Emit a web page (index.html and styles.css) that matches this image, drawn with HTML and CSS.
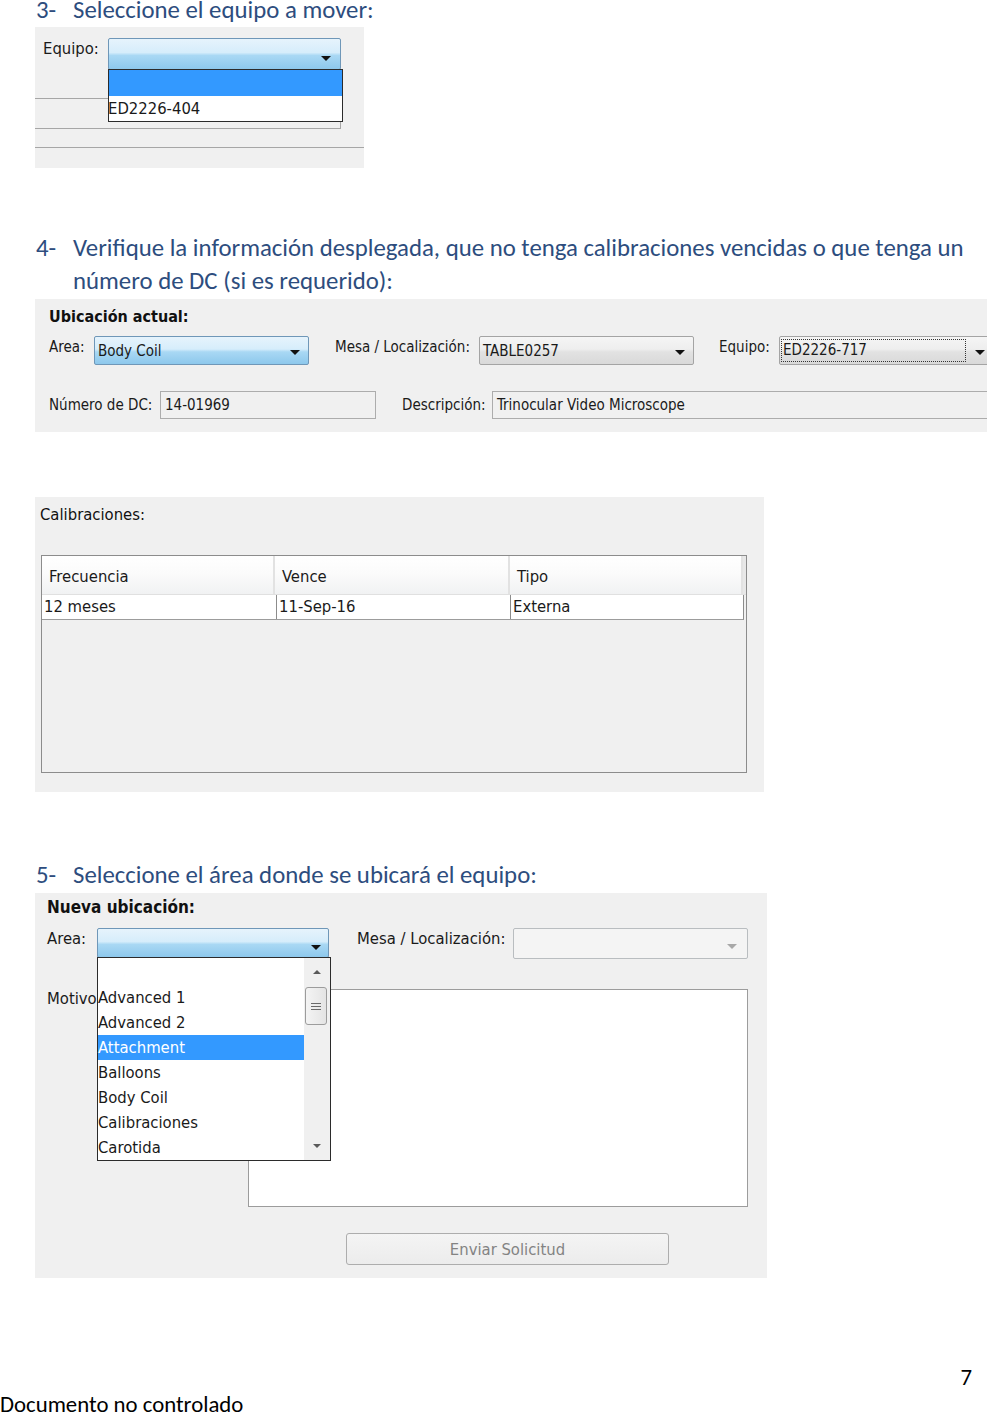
FILE: index.html
```html
<!DOCTYPE html>
<html lang="es">
<head>
<meta charset="utf-8">
<title>Documento</title>
<link rel="stylesheet" href="styles.css">
</head>
<body>
<main class="page">
  <p class="step step-first"><span class="num">3-</span><span class="txt">Seleccione el equipo a mover:</span></p>

  <section class="panel panel-equipo">
    <div class="eq-row">
      <span class="lbl lbl-eq">Equipo:</span>
      <div class="combo combo-blue combo-eq">
        <span class="combo-val"></span>
        <span class="arrow"></span>
        <ul class="popup popup-eq">
          <li class="sel"></li>
          <li>ED2226-404</li>
        </ul>
      </div>
    </div>
    <div class="eq-box"></div>
    <div class="eq-foot"></div>
  </section>

  <p class="step step-4"><span class="num">4-</span><span class="txt">Verifique la información desplegada, que no tenga calibraciones vencidas o que tenga un número de DC (si es requerido):</span></p>

  <section class="panel panel-actual">
    <h3 class="ptitle">Ubicación actual:</h3>
    <div class="frow frow-1">
      <span class="lbl w-area">Area:</span>
      <div class="combo combo-blue w215"><span class="combo-val">Body Coil</span><span class="arrow"></span></div>
      <span class="lbl w-mesa">Mesa / Localización:</span>
      <div class="combo combo-gray w215"><span class="combo-val">TABLE0257</span><span class="arrow"></span></div>
      <span class="lbl w-equipo">Equipo:</span>
      <div class="combo combo-gray w216b"><span class="combo-val focus">ED2226-717</span><span class="arrow"></span></div>
    </div>
    <div class="frow frow-2">
      <span class="lbl w-dc">Número de DC:</span>
      <div class="field w216">14-01969</div>
      <span class="lbl w-desc">Descripción:</span>
      <div class="field w-wide">Trinocular Video Microscope</div>
    </div>
  </section>

  <section class="panel panel-cal">
    <h3 class="ptitle plain">Calibraciones:</h3>
    <div class="table">
      <div class="thead">
        <div class="th c1">Frecuencia</div>
        <div class="th c2">Vence</div>
        <div class="th c3">Tipo</div>
        <div class="th cfill"></div>
      </div>
      <div class="trow">
        <div class="td c1">12 meses</div>
        <div class="td c2">11-Sep-16</div>
        <div class="td c3">Externa</div>
      </div>
    </div>
  </section>

  <p class="step step-5"><span class="num">5-</span><span class="txt">Seleccione el área donde se ubicará el equipo:</span></p>

  <section class="panel panel-nueva">
    <h3 class="ptitle">Nueva ubicación:</h3>
    <div class="frow nrow-1">
      <span class="lbl w-narea">Area:</span>
      <div class="combo combo-blue w232">
        <span class="combo-val"></span><span class="arrow"></span>
        <div class="popup popup-area">
          <ul class="plist">
            <li></li>
            <li>Advanced 1</li>
            <li>Advanced 2</li>
            <li class="sel">Attachment</li>
            <li>Balloons</li>
            <li>Body Coil</li>
            <li>Calibraciones</li>
            <li>Carotida</li>
          </ul>
          <div class="vscroll">
            <span class="sarrow up"></span>
            <span class="thumb"><i></i><i></i><i></i></span>
            <span class="sarrow down"></span>
          </div>
        </div>
      </div>
      <span class="lbl w-nmesa">Mesa / Localización:</span>
      <div class="combo combo-dis w235"><span class="combo-val"></span><span class="arrow"></span></div>
    </div>
    <div class="frow nrow-2">
      <span class="lbl w-motivo">Motivo</span>
      <div class="textarea"></div>
    </div>
    <button class="btn" type="button" disabled>Enviar Solicitud</button>
  </section>

  <footer class="foot">
    <div class="pnum">7</div>
    <div class="docnote">Documento no controlado</div>
  </footer>
</main>
</body>
</html>
```

FILE: styles.css
```css
html, body {
  margin: 0;
  padding: 0;
  background: #ffffff;
}
body {
  width: 987px;
  overflow: hidden;
}
.page {
  width: 987px;
  overflow: hidden;
  font-family: "DejaVu Sans Condensed", "DejaVu Sans", sans-serif;
  font-stretch: condensed;
}

/* ---------- Word-like steps ---------- */
.step {
  display: flex;
  margin: 0 0 0 36px;
  font-family: Carlito, Lato, sans-serif;
  font-stretch: normal;
  font-size: 24.8px;
  line-height: 33px;
  color: #2d4d7e;
}
.step .num { flex: 0 0 37px; }
.step .txt { flex: 1; }
.step-first { margin-top: -7px; }
.step-4 { margin-top: 64px; }
.step-5 { margin-top: 66px; }

/* ---------- Panels ---------- */
.panel {
  background: #f0f0f0;
  margin-left: 35px;
  box-sizing: border-box;
  font-size: 16.5px;
  color: #1a1a1a;
}
.ptitle {
  margin: 0;
  font-size: 16px;
  font-weight: bold;
  line-height: 18px;
  color: #111;
  white-space: nowrap;
}
.ptitle.plain { font-weight: normal; font-size: 16.5px; }

.lbl {
  display: block;
  flex: none;
  line-height: 18px;
  white-space: nowrap;
  color: #1a1a1a;
}

/* combos */
.combo {
  position: relative;
  box-sizing: border-box;
  display: flex;
  align-items: center;
  border-radius: 2px;
  flex: none;
}
.combo-val {
  flex: 1;
  padding-left: 3px;
  line-height: 18px;
  white-space: nowrap;
  overflow: hidden;
}
.arrow {
  flex: none;
  width: 0;
  height: 0;
  border-left: 5px solid transparent;
  border-right: 5px solid transparent;
  border-top: 5px solid #111;
  margin-right: 8px;
  margin-top: 3px;
}
.combo-blue {
  border: 1px solid #6f97b8;
  background: linear-gradient(#e6f3fc 0%, #d6edfb 45%, #a9d8f4 55%, #8dc8ec 100%);
}
.combo-gray {
  border: 1px solid #a4a4a4;
  background: linear-gradient(#f5f5f5 0%, #eeeeee 45%, #e2e2e2 55%, #d9d9d9 100%);
}
.combo-dis {
  border: 1px solid #b9bdc0;
  background: #f4f4f4;
}
.combo-dis .arrow { border-top-color: #a8a8a8; margin-right: 10px; }
.focus {
  flex: 0 0 auto;
  width: 183px;
  box-sizing: border-box;
  margin-left: 2px;
  padding-left: 1px;
  outline: 1px dotted #333;
  outline-offset: 0;
  line-height: 21px;
}
.combo-gray .focus + .arrow { margin-left: 10px; }

/* popups */
.popup {
  position: absolute;
  z-index: 5;
  left: -1px;
  top: 100%;
  box-sizing: border-box;
  background: #fff;
  border: 1px solid #2b2b2b;
  margin: 0;
  padding: 0;
  list-style: none;
}
.popup li { list-style: none; }

/* ---------- Panel 1: equipo ---------- */
.panel-equipo {
  width: 329px;
  height: 140px;
  margin-top: 1px;
}
.eq-row {
  display: flex;
  align-items: flex-start;
  height: 71px;
  padding: 11px 0 0 8px;
  box-sizing: border-box;
}
.lbl-eq { width: 65px; padding-top: 2px; }
.combo-eq { width: 233px; height: 32px; }
.combo-eq .arrow { margin-top: 8px; margin-right: 9px; }
.popup-eq { width: 235px; }
.popup-eq li {
  height: 25px;
  line-height: 25px;
  padding-left: 0;
  margin-left: -1px;
  white-space: nowrap;
}
.popup-eq li.sel { height: 26px; margin-left: 0; background: #3399ff; }
.eq-box {
  width: 306px;
  height: 31px;
  box-sizing: border-box;
  border: 1px solid #a6a6a6;
  border-left: none;
}
.eq-foot {
  margin-top: 18px;
  height: 20px;
  border-top: 1px solid #a6a6a6;
  background: #f0f0f0;
}

/* ---------- Panel 2: actual ---------- */
.panel-actual {
  width: 952px;
  height: 133px;
  margin-top: 2px;
  padding: 9px 0 0 14px;
  overflow: hidden;
  font-size: 15px;
}
.frow {
  display: flex;
  align-items: flex-start;
}
.frow-1 { margin-top: 10px; }
.frow-1 .lbl { padding-top: 2px; }
.frow-2 { margin-top: 26px; }
.frow-2 .lbl { padding-top: 5px; }
.w-area { width: 45px; }
.w-mesa { width: 144px; margin-left: 26px; }
.w-equipo { width: 60px; margin-left: 25px; }
.w215 { width: 215px; height: 29px; }
.w216b { width: 216px; height: 29px; }
.w-dc { width: 111px; }
.w-desc { width: 90px; margin-left: 26px; }

.field {
  box-sizing: border-box;
  height: 28px;
  border: 1px solid #acacac;
  background: #f0f0f0;
  padding: 4px 0 0 4px;
  line-height: 18px;
  white-space: nowrap;
  flex: none;
}
.w216 { width: 216px; }
.w-wide { width: 520px; }

/* ---------- Panel 3: calibraciones ---------- */
.panel-cal {
  width: 729px;
  height: 295px;
  margin-top: 65px;
  padding: 9px 0 0 5px;
}
.table {
  margin: 31px 0 0 1px;
  width: 706px;
  height: 218px;
  box-sizing: border-box;
  border: 1px solid #8c8c8c;
  background: #f0f0f0;
}
.thead {
  display: flex;
  height: 38px;
  border-bottom: 1px solid #e0e0e0;
}
.th {
  box-sizing: border-box;
  height: 38px;
  padding: 12px 0 0 7px;
  line-height: 18px;
  background: linear-gradient(#ffffff 0%, #fbfbfb 45%, #f1f2f3 100%);
  border-right: 2px solid #e2e2e2;
  white-space: nowrap;
}
.th.c1 { width: 233px; }
.th.c2 { width: 235px; }
.th.c3 { width: 233px; }
.th.cfill { width: 3px; padding: 0; border-right: none; background: #e8e8e8; }
.trow {
  display: flex;
  width: 702px;
  height: 25px;
  box-sizing: border-box;
  background: #fff;
  border-bottom: 1px solid #9c9c9c;
  border-right: 1px solid #8c8c8c;
}
.td {
  box-sizing: border-box;
  padding-left: 2px;
  line-height: 24px;
  white-space: nowrap;
}
.td.c1 { width: 234px; }
.td.c2 { width: 234px; border-left: 1px solid #8c8c8c; }
.td.c3 { flex: 1; border-left: 1px solid #8c8c8c; }

/* ---------- Panel 4: nueva ---------- */
.panel-nueva {
  width: 732px;
  height: 385px;
  margin-top: 2px;
  padding: 5px 0 0 12px;
}
.panel-nueva .ptitle { font-size: 17px; }
.nrow-1 { margin-top: 12px; }
.nrow-1 .lbl { padding-top: 2px; }
.w-narea { width: 50px; }
.w232 { width: 232px; height: 30px; }
.w232 > .arrow { margin-top: 8px; margin-right: 7px; }
.w-nmesa { width: 156px; margin-left: 28px; }
.w235 { width: 235px; height: 31px; }
.combo-dis .arrow { margin-top: 6px; }

.popup-area {
  display: flex;
  width: 234px;
  height: 204px;
  padding-top: 2px;
}
.plist {
  margin: 0;
  padding: 0;
  width: 206px;
  list-style: none;
}
.plist li {
  height: 25px;
  line-height: 25px;
  padding-left: 0;
  white-space: nowrap;
  color: #1a1a1a;
}
.plist li.sel { background: #3399ff; color: #fff; }
.vscroll {
  position: relative;
  width: 26px;
  margin-top: -2px;
  height: 202px;
  background: #f0f0f0;
}
.sarrow {
  position: absolute;
  left: 9px;
  width: 0;
  height: 0;
  border-left: 4px solid transparent;
  border-right: 4px solid transparent;
}
.sarrow.up { top: 12px; border-bottom: 4px solid #5a5a5a; }
.sarrow.down { bottom: 12px; border-top: 4px solid #5a5a5a; }
.thumb {
  position: absolute;
  left: 1px;
  top: 29px;
  width: 22px;
  height: 38px;
  box-sizing: border-box;
  border: 1px solid #9c9c9c;
  border-radius: 3px;
  background: linear-gradient(90deg, #f4f4f4, #e4e4e4);
  display: flex;
  flex-direction: column;
  align-items: center;
  justify-content: center;
  gap: 2px;
}
.thumb i {
  display: block;
  width: 10px;
  height: 1px;
  background: #6a6a6a;
}

.nrow-2 { margin-top: 30px; }
.nrow-2 .lbl { padding-top: 1px; }
.w-motivo { width: 201px; overflow: hidden; }
.textarea {
  flex: none;
  width: 500px;
  height: 218px;
  box-sizing: border-box;
  border: 1px solid #9c9c9c;
  background: #fff;
}

.btn {
  display: block;
  margin: 26px 0 0 299px;
  width: 323px;
  height: 32px;
  border: 1px solid #adadad;
  border-radius: 3px;
  background: linear-gradient(#f4f4f4, #ececec);
  font-family: inherit;
  font-stretch: condensed;
  font-size: 16.5px;
  color: #838383;
  padding: 0;
}

/* ---------- footer ---------- */
.foot {
  margin-top: 86px;
  font-family: Carlito, Lato, sans-serif;
  font-stretch: normal;
  font-size: 22.8px;
  line-height: 27px;
  color: #000;
}
.pnum {
  text-align: right;
  padding-right: 15px;
}
.docnote { margin-top: 0; }
```
